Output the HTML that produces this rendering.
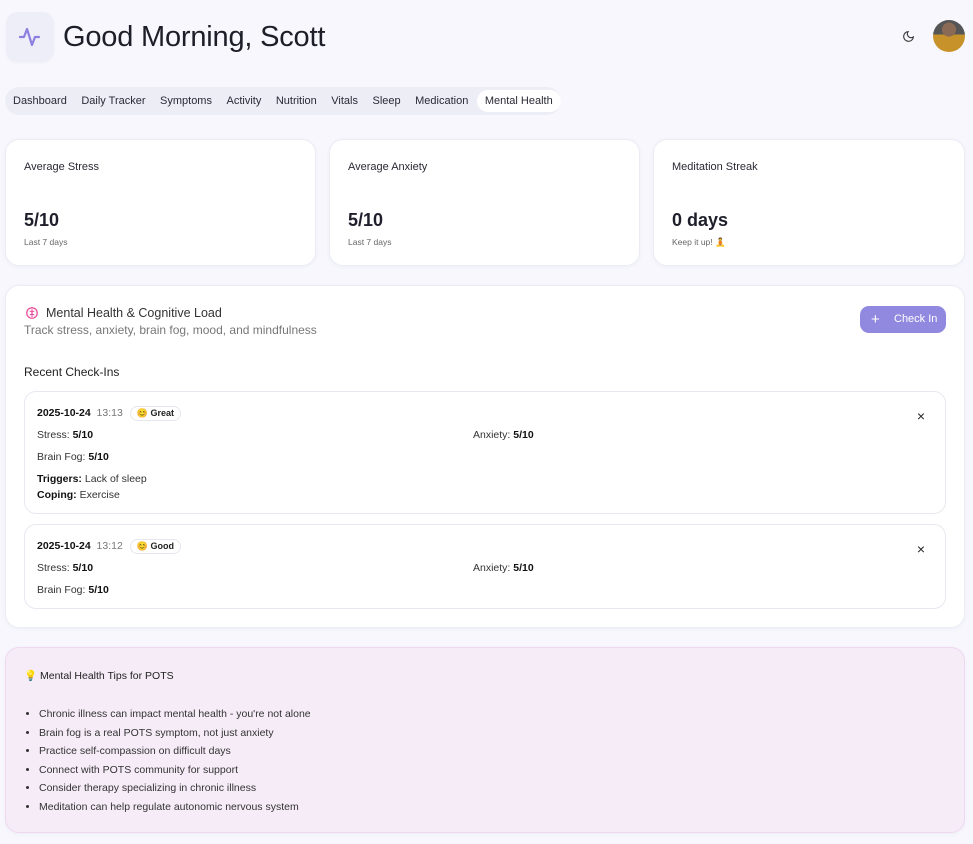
<!DOCTYPE html>
<html><head><meta charset="utf-8"><style>
*{box-sizing:border-box;margin:0;padding:0}
body{width:973px;height:844px;background:#f7f7fd;font-family:"Liberation Sans",sans-serif;color:#1f1f2b;position:relative;overflow:hidden;font-size:11px}
.abs{position:absolute}
.logo{left:6px;top:12px;width:48px;height:50px;border-radius:12px;background:#eeeef8;box-shadow:0 1px 3px rgba(0,0,0,.04)}
h1{position:absolute;left:63px;top:21px;font-size:29px;font-weight:400;color:#1e1e28;letter-spacing:-.2px}
.tabs{left:5px;top:87px;height:28px;width:556px;background:#ededf6;border-radius:14px;display:flex;align-items:center;padding-left:8px;font-size:11px;color:#2a2a35}
.tabs span{margin-right:14.5px}
.tabs .act{background:#fff;border-radius:12px;padding:5px 8px;margin-left:-6px;margin-right:0}
.card{position:absolute;background:#fff;border:1px solid #ececf5;border-radius:14px;box-shadow:0 1px 4px rgba(60,60,120,.05)}
.lbl{position:absolute;left:18px;top:21px;font-size:11px;color:#2a2a35}
.val{position:absolute;left:18px;top:70px;font-size:18px;font-weight:700}
.sub{position:absolute;left:18px;top:97px;font-size:8.5px;color:#666}
.entry{position:absolute;left:18px;width:922px;border:1px solid #e8e8f0;border-radius:12px;background:#fff}
.row{position:absolute;font-size:10.5px;color:#333}
.row b{color:#111}
.badge{display:inline-block;border:1px solid #e6e6ee;border-radius:9px;padding:1px 6px;font-size:9px;font-weight:700;margin-left:4px;color:#222}
.x{position:absolute;right:20px;top:16px;font-size:14px;color:#222}
ul{position:absolute;left:38px;top:57px;font-size:10.5px;color:#333;line-height:18.6px}
</style></head><body>
<div class="abs logo"><svg width="48" height="50" viewBox="0 0 48 50"><path d="M14 25h4l3-8 5 16 3-8h4" fill="none" stroke="#8b7fe0" stroke-width="2.2" stroke-linecap="round" stroke-linejoin="round"/></svg></div>
<h1>Good Morning, Scott</h1>
<svg class="abs" style="left:902px;top:30px" width="13" height="13" viewBox="0 0 24 24"><path d="M21 12.8A9 9 0 1 1 11.2 3a7 7 0 0 0 9.8 9.8z" fill="none" stroke="#333" stroke-width="2"/></svg>
<div class="abs" style="left:933px;top:20px;width:32px;height:32px;border-radius:50%;background:radial-gradient(circle at 50% 30%,#8a6a55 0 25%,transparent 26%),linear-gradient(#555 0 45%,#c8922a 45%);"></div>
<div class="abs tabs"><span>Dashboard</span><span>Daily Tracker</span><span>Symptoms</span><span>Activity</span><span>Nutrition</span><span>Vitals</span><span>Sleep</span><span>Medication</span><span class="act">Mental Health</span></div>

<div class="card" style="left:5px;top:139px;width:311px;height:127px"><div class="lbl">Average Stress</div><div class="val">5/10</div><div class="sub">Last 7 days</div></div>
<div class="card" style="left:329px;top:139px;width:311px;height:127px"><div class="lbl">Average Anxiety</div><div class="val">5/10</div><div class="sub">Last 7 days</div></div>
<div class="card" style="left:653px;top:139px;width:312px;height:127px"><div class="lbl">Meditation Streak</div><div class="val">0 days</div><div class="sub">Keep it up! 🧘</div></div>

<div class="card" style="left:5px;top:285px;width:960px;height:343px">
<svg class="abs" style="left:19px;top:20px" width="14" height="14" viewBox="0 0 24 24"><circle cx="12" cy="12" r="9" fill="none" stroke="#e8509a" stroke-width="2.2"/><path d="M12 5v14M8 9c2 0 4 1 4 3M16 9c-2 0-4 1-4 3M8 15c2 0 4-1 4-3M16 15c-2 0-4-1-4-3" fill="none" stroke="#e8509a" stroke-width="1.8"/></svg>
<div class="abs" style="left:40px;top:20px;font-size:12.5px;color:#333">Mental Health &amp; Cognitive Load</div>
<div class="abs" style="left:18px;top:37px;font-size:12px;color:#777">Track stress, anxiety, brain fog, mood, and mindfulness</div>
<div class="abs" style="left:854px;top:20px;width:86px;height:27px;border-radius:9px;background:#9189df;color:#fff;font-size:11px;line-height:27px"><span style="position:absolute;left:11px;top:0;font-size:15px">+</span><span style="position:absolute;left:34px;top:0">Check In</span></div>
<div class="abs" style="left:18px;top:79px;font-size:12px;color:#222">Recent Check-Ins</div>
<div class="entry" style="top:105px;height:123px">
<div class="row" style="left:12px;top:14px"><b>2025-10-24</b> <span style="color:#777">&nbsp;13:13</span> <span class="badge">😊 Great</span></div>
<div class="row" style="left:12px;top:37px">Stress: <b>5/10</b></div>
<div class="row" style="left:448px;top:37px">Anxiety: <b>5/10</b></div>
<div class="row" style="left:12px;top:59px">Brain Fog: <b>5/10</b></div>
<div class="row" style="left:12px;top:81px"><b>Triggers:</b> Lack of sleep</div>
<div class="row" style="left:12px;top:97px"><b>Coping:</b> Exercise</div>
<div class="x">×</div></div>
<div class="entry" style="top:238px;height:85px">
<div class="row" style="left:12px;top:14px"><b>2025-10-24</b> <span style="color:#777">&nbsp;13:12</span> <span class="badge">😊 Good</span></div>
<div class="row" style="left:12px;top:37px">Stress: <b>5/10</b></div>
<div class="row" style="left:448px;top:37px">Anxiety: <b>5/10</b></div>
<div class="row" style="left:12px;top:59px">Brain Fog: <b>5/10</b></div>
<div class="x">×</div></div>
</div>

<div class="card" style="left:5px;top:647px;width:960px;height:186px;background:#f6ecf8;border-color:#f0d8ef">
<div class="abs" style="left:18px;top:21px;font-size:10.5px;color:#222">💡 Mental Health Tips for POTS</div>
<ul style="left:33px"><li>Chronic illness can impact mental health - you're not alone</li><li>Brain fog is a real POTS symptom, not just anxiety</li><li>Practice self-compassion on difficult days</li><li>Connect with POTS community for support</li><li>Consider therapy specializing in chronic illness</li><li>Meditation can help regulate autonomic nervous system</li></ul>
</div>
</body></html>
